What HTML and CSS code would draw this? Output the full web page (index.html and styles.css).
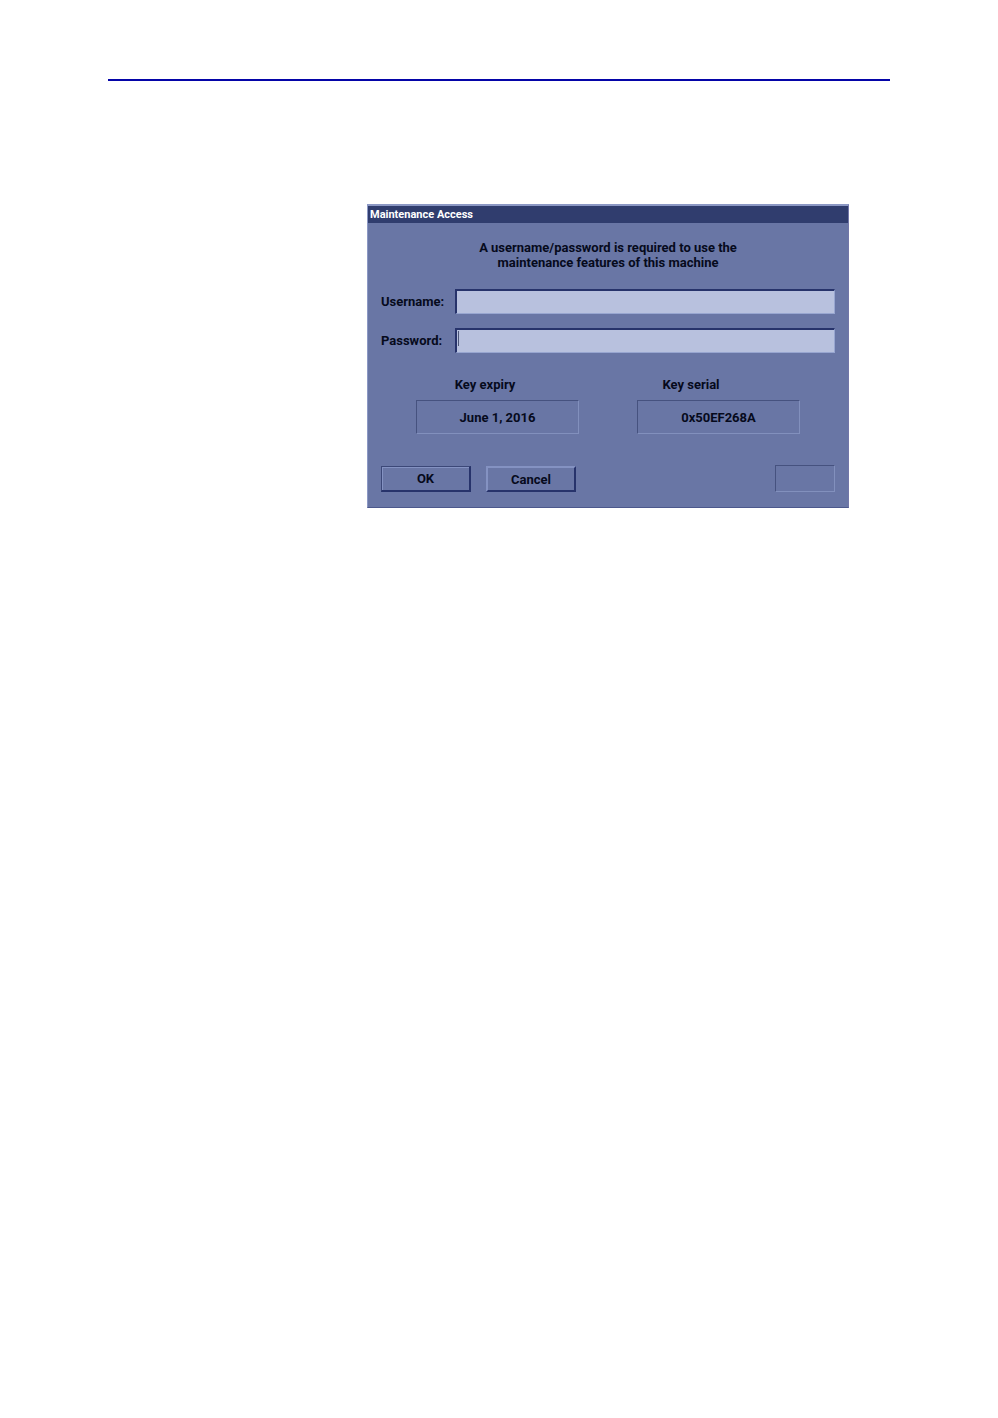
FILE: index.html
```html
<!DOCTYPE html>
<html lang="en">
<head>
    <meta charset="UTF-8">
    <meta name="viewport" content="width=device-width, initial-scale=1.0">
    <title>Maintenance Access</title>
    <link rel="stylesheet" href="styles.css">
</head>
<body>

    <main class="page">
        <hr class="page-rule">

        <section class="dialog">
            <h1 class="dialog-title">Maintenance Access</h1>

            <form class="dialog-body">
                <p class="intro">A username/password is required to use the<br>maintenance features of this machine</p>

                <div class="field">
                    <label for="username">Username:</label>
                    <input type="text" id="username" name="username">
                </div>
                <div class="field">
                    <label for="password">Password:</label>
                    <input type="password" id="password" name="password" class="active">
                </div>

                <div class="key-labels">
                    <label for="key-expiry">Key expiry</label>
                    <label for="key-serial">Key serial</label>
                </div>
                <div class="key-values">
                    <output class="sunken" id="key-expiry">June 1, 2016</output>
                    <output class="sunken" id="key-serial">0x50EF268A</output>
                </div>

                <div class="actions">
                    <button type="submit" class="default">OK</button>
                    <button type="button">Cancel</button>
                    <div class="sunken status"></div>
                </div>
            </form>
        </section>
    </main>

</body>
</html>
```

FILE: styles.css
```css
* {
    box-sizing: border-box;
}
body {
    margin: 0;
    background-color: #fff;
    color: #060a1c;
    font-family: Roboto, "Liberation Sans", sans-serif;
    font-size: 13px;
    font-weight: 700;
    line-height: 15px;
}
.page {
    padding: 79px 108px;
}
.page-rule {
    height: 2px;
    margin: 0 0 123px;
    border: 0;
    background-color: #0505a8;
}
.dialog {
    max-width: 482px;
    margin-left: auto;
    margin-right: 41px;
    border: 1px solid #8c98c4;
    border-top-width: 2px;
    border-right-color: #7276a8;
    border-bottom-color: #4c588c;
    background-color: #6976a5;
}
.dialog-title {
    margin: 0;
    padding: 1px 2px 0;
    background-color: #303d6e;
    color: #fff;
    font-size: 11px;
    line-height: 16px;
}
.dialog-body {
    padding: 17px 13px 15px;
}
.intro {
    margin: 0 0 19px;
    text-align: center;
}
.field {
    display: flex;
    align-items: center;
    margin-bottom: 14px;
}
.field label {
    width: 74px;
}
.field input {
    flex: 1;
    min-width: 0;
    height: 25px;
    padding: 2px 4px;
    border: 2px solid;
    border-color: #27336b #98a6d0 #98a6d0 #27336b;
    border-right-width: 1px;
    border-bottom-width: 1px;
    background-color: #b8c1de;
    color: inherit;
    font: inherit;
    outline: none;
}
/* text cursor of the active field */
.field .active {
    background-image: linear-gradient(#4c5678, #4c5678);
    background-position: 1px 1px;
    background-repeat: no-repeat;
    background-size: 1px 15px;
}
.key-labels {
    display: grid;
    grid-template-columns: 206px 206px;
    margin: 24px 0 8px;
    padding-left: 1px;
    text-align: center;
}
.key-values {
    display: flex;
    gap: 58px;
    padding: 0 35px;
}
.sunken {
    border: 1px solid;
    border-color: #46527f #8290bd #8290bd #46527f;
}
.key-values .sunken {
    flex: 1;
    padding: 9px 0 8px;
    text-align: center;
    line-height: 15px;
}
.actions {
    display: flex;
    align-items: flex-end;
    gap: 15px;
    margin-top: 31px;
}
.actions button {
    width: 90px;
    height: 26px;
    padding: 0;
    border: 2px solid;
    border-color: #8492c2 #27336b #27336b #8492c2;
    background-color: #6976a5;
    color: inherit;
    font: inherit;
}
.actions .default {
    border-width: 1px 2px 2px 1px;
    border-color: #3c4878 #27336b #27336b #3c4878;
    box-shadow: inset 1px 1px #8492c2;
}
.status {
    width: 60px;
    height: 27px;
    margin-left: auto;
}
```
